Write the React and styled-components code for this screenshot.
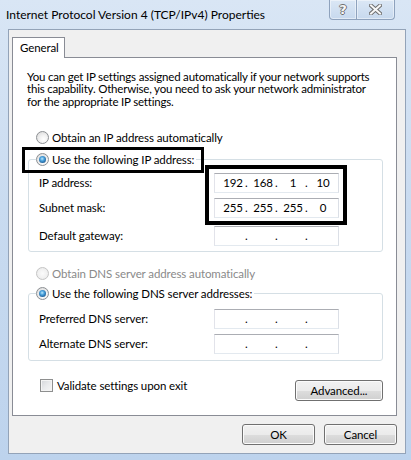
import React from "react";
import styled, { createGlobalStyle } from "styled-components";

const Global = createGlobalStyle`
  html, body { margin: 0; padding: 0; }
  body {
    font-family: Lato, "Noto Sans", sans-serif;
    font-size: 11.5px;
    letter-spacing: -0.1px;
    color: #000;
    background: #c6d9ef;
  }
`;

const Window = styled.div`
  width: 411px;
  height: 460px;
  box-sizing: border-box;
  background: linear-gradient(180deg, #d9e6f5 0%, #c9dbf0 45%, #bdd3ed 100%);
  display: flex;
  flex-direction: column;
  overflow: hidden;
`;

const TitleBar = styled.div`
  height: 29px;
  flex-shrink: 0;
  display: flex;
  align-items: center;
  padding-left: 6px;
`;

const Title = styled.div`
  flex: 1;
  font-size: 12px;
  letter-spacing: 0;
  white-space: nowrap;
`;

const CaptionButtons = styled.div`
  display: flex;
  align-self: flex-start;
  margin-right: 16px;
`;

const CaptionButton = styled.div`
  width: ${(p) => p.$w}px;
  height: 20px;
  box-sizing: border-box;
  border: 1px solid #8ea2bd;
  border-top: none;
  border-left-width: ${(p) => (p.$first ? 1 : 0)}px;
  border-radius: ${(p) => (p.$first ? "0 0 0 4px" : "0 0 4px 0")};
  background: linear-gradient(180deg, #dbe7f5 0%, #c7d9ee 100%);
  box-shadow: inset 0 0 0 1px rgba(255, 255, 255, 0.45);
  display: flex;
  align-items: center;
  justify-content: center;
`;

const HelpGlyph = styled.span`
  font-family: "DejaVu Sans", sans-serif;
  font-weight: bold;
  font-size: 13px;
  line-height: 1;
  color: #f7f7f7;
  text-shadow: 1px 0 #6f6f6f, -1px 0 #6f6f6f, 0 1px #6f6f6f, 0 -1px #6f6f6f;
`;

const Client = styled.div`
  margin: 0 5px 6px 8px;
  height: 425px;
  box-sizing: border-box;
  border: 1px solid #93a3b8;
  background: #f0f0f0;
  padding: 7px 8px 0 3px;
  display: flex;
  flex-direction: column;
`;

const TabStrip = styled.div`
  display: flex;
  height: 20px;
`;

const Tab = styled.div`
  position: relative;
  z-index: 1;
  width: 53px;
  height: 21px;
  box-sizing: border-box;
  border: 1px solid #898c95;
  border-bottom: none;
  background: #fff;
  padding-left: 7px;
  line-height: 19px;
`;

const Panel = styled.div`
  position: relative;
  height: 359px;
  box-sizing: border-box;
  border: 1px solid #898c95;
  background: #fff;
  padding: 0 13px 0 15px;
`;

const Intro = styled.p`
  margin: 12.5px 0 0 -1px;
  line-height: 12.7px;
  letter-spacing: -0.2px;
  white-space: nowrap;
`;

const RadioRow = styled.div`
  display: flex;
  align-items: center;
  gap: 3px;
  height: 16px;
  margin-top: ${(p) => p.$mt || 0}px;
  padding-left: 8px;
  color: ${(p) => (p.$disabled ? "#8a8a8a" : "#000")};
  white-space: nowrap;
`;

const Radio = styled.span`
  width: 13px;
  height: 13px;
  box-sizing: border-box;
  border-radius: 50%;
  border: 1px solid ${(p) => (p.$disabled ? "#c4c4c4" : "#8c8f93")};
  background: ${(p) =>
    p.$disabled
      ? "radial-gradient(circle at 50% 50%, #fbfbfb 0%, #eeeeee 70%, #e2e2e2 100%)"
      : "radial-gradient(circle at 60% 65%, #ffffff 0%, #f2f2f2 40%, #d4d4d4 100%)"};
  display: flex;
  align-items: center;
  justify-content: center;
  flex-shrink: 0;
  &::after {
    content: "";
    display: ${(p) => (p.$checked ? "block" : "none")};
    width: 7px;
    height: 7px;
    border-radius: 50%;
    background: radial-gradient(circle at 45% 40%, #bfe8fb 0%, #4aa2dd 35%, #1f5f98 75%, #163f6b 100%);
  }
`;

const Group = styled.fieldset`
  margin: ${(p) => p.$mt || 0}px 0 0 0;
  padding: 0 0 ${(p) => p.$pb}px 10px;
  border: 1px solid #d5dfe5;
  border-radius: 3px;
  min-width: 0;
`;

const Legend = styled.legend`
  display: flex;
  align-items: center;
  gap: 3px;
  height: 16px;
  margin-left: -3px;
  padding: 0 2px 0 0;
  white-space: nowrap;
`;

const FieldGrid = styled.div`
  display: flex;
  flex-direction: column;
  padding-top: ${(p) => p.$pt}px;
`;

const FieldRow = styled.div`
  display: grid;
  grid-template-columns: 175px 125px;
  align-items: center;
  height: 20px;
  margin-top: ${(p) => p.$mt || 0}px;
`;

const IpBox = styled.div`
  width: 125px;
  height: 20px;
  box-sizing: border-box;
  border: 1px solid;
  border-color: #abadb3 #dbdfe6 #e3e9ef #e2e3ea;
  background: #fff;
  padding-left: 6px;
  display: grid;
  grid-template-columns: 24px 6px 24px 6px 24px 6px 24px;
  align-items: center;
  line-height: 18px;
`;

const Octet = styled.span`
  text-align: center;
`;

const Dot = styled.span`
  text-align: left;
`;

const BottomRow = styled.div`
  display: flex;
  justify-content: space-between;
  align-items: flex-start;
  margin-top: 18px;
  padding-left: 12px;
`;

const CheckLabel = styled.label`
  display: flex;
  align-items: center;
  gap: 4px;
  height: 13px;
  white-space: nowrap;
`;

const CheckBox = styled.span`
  width: 13px;
  height: 13px;
  box-sizing: border-box;
  border: 1px solid #8e8f8f;
  background: linear-gradient(135deg, #d3d5d9 0%, #e9eaec 50%, #f6f6f6 100%);
  box-shadow: inset 0 0 0 1px #f4f4f4;
  flex-shrink: 0;
`;

const Button = styled.button`
  width: ${(p) => p.$w}px;
  height: 21px;
  margin-top: ${(p) => p.$mt || 0}px;
  box-sizing: border-box;
  border: 1px solid #707070;
  border-radius: 3px;
  background: linear-gradient(180deg, #f2f2f2 0%, #ebebeb 50%, #dddddd 51%, #cfcfcf 100%);
  box-shadow: inset 0 0 0 1px #fbfbfb;
  font-family: inherit;
  font-size: 11.5px;
  letter-spacing: -0.1px;
  color: #000;
  padding: 0;
  line-height: 19px;
`;

const ButtonRow = styled.div`
  display: flex;
  justify-content: flex-end;
  gap: 9px;
  margin-top: 8px;
`;

const Highlight = styled.div`
  position: absolute;
  left: ${(p) => p.$x}px;
  top: ${(p) => p.$y}px;
  width: ${(p) => p.$w}px;
  height: ${(p) => p.$h}px;
  box-sizing: border-box;
  border: ${(p) => p.$t}px solid #000;
  pointer-events: none;
`;

function IpField({ value }) {
  const parts = value ? value.split(".") : ["", "", "", ""];
  return (
    <IpBox>
      {parts.map((p, i) => (
        <React.Fragment key={i}>
          <Octet>{p}</Octet>
          {i < 3 && <Dot>.</Dot>}
        </React.Fragment>
      ))}
    </IpBox>
  );
}

export default function App() {
  return (
    <>
      <Global />
      <Window>
        <TitleBar>
          <Title>Internet Protocol Version 4 (TCP/IPv4) Properties</Title>
          <CaptionButtons>
            <CaptionButton $w={28} $first>
              <HelpGlyph>?</HelpGlyph>
            </CaptionButton>
            <CaptionButton $w={38}>
              <svg width="13" height="11" viewBox="0 0 13 11">
                <path d="M2 1.5 L11 9.5 M11 1.5 L2 9.5" stroke="#6f6f6f" strokeWidth="4" strokeLinecap="square" />
                <path d="M2 1.5 L11 9.5 M11 1.5 L2 9.5" stroke="#f7f7f7" strokeWidth="2" strokeLinecap="square" />
              </svg>
            </CaptionButton>
          </CaptionButtons>
        </TitleBar>
        <Client>
          <TabStrip>
            <Tab>General</Tab>
          </TabStrip>
          <Panel>
            <Intro>
              You can get IP settings assigned automatically if your network supports
              <br />
              this capability. Otherwise, you need to ask your network administrator
              <br />
              for the appropriate IP settings.
            </Intro>

            <RadioRow $mt={21}>
              <Radio />
              Obtain an IP address automatically
            </RadioRow>

            <Group $mt={6} $pb={5}>
              <Legend>
                <Radio $checked />
                Use the following IP address:
              </Legend>
              <FieldGrid $pt={5}>
                <FieldRow>
                  <span>IP address:</span>
                  <IpField value="192.168.1.10" />
                </FieldRow>
                <FieldRow $mt={5}>
                  <span>Subnet mask:</span>
                  <IpField value="255.255.255.0" />
                </FieldRow>
                <FieldRow $mt={8}>
                  <span>Default gateway:</span>
                  <IpField />
                </FieldRow>
              </FieldGrid>
            </Group>

            <RadioRow $mt={14} $disabled>
              <Radio $disabled />
              Obtain DNS server address automatically
            </RadioRow>

            <Group $mt={4} $pb={6}>
              <Legend>
                <Radio $checked />
                Use the following DNS server addresses:
              </Legend>
              <FieldGrid $pt={7}>
                <FieldRow>
                  <span>Preferred DNS server:</span>
                  <IpField />
                </FieldRow>
                <FieldRow $mt={5}>
                  <span>Alternate DNS server:</span>
                  <IpField />
                </FieldRow>
              </FieldGrid>
            </Group>

            <BottomRow>
              <CheckLabel>
                <CheckBox />
                Validate settings upon exit
              </CheckLabel>
              <Button $w={88} $mt={1}>Advanced...</Button>
            </BottomRow>

            <Highlight $x={9} $y={89} $w={182} $h={26} $t={3} />
            <Highlight $x={192} $y={107} $w={142} $h={60} $t={4} />
          </Panel>
          <ButtonRow>
            <Button $w={73}>OK</Button>
            <Button $w={73}>Cancel</Button>
          </ButtonRow>
        </Client>
      </Window>
    </>
  );
}
